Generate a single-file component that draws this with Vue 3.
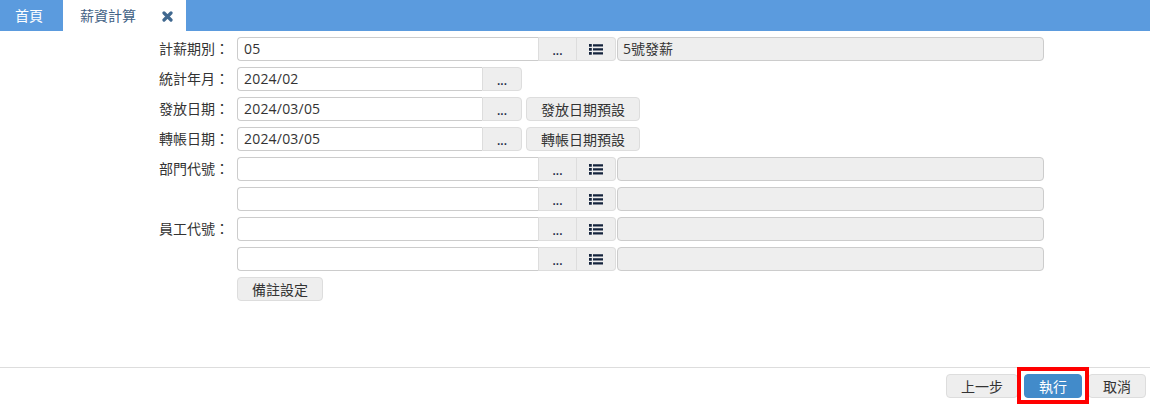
<script setup>
const rows = [
  { label: '計薪期別：', value: '05', kind: 'full', desc: '5號發薪' },
  { label: '統計年月：', value: '2024/02', kind: 'short' },
  { label: '發放日期：', value: '2024/03/05', kind: 'short', action: '發放日期預設' },
  { label: '轉帳日期：', value: '2024/03/05', kind: 'short', action: '轉帳日期預設' },
  { label: '部門代號：', value: '', kind: 'full', desc: '' },
  { label: '', value: '', kind: 'full', desc: '' },
  { label: '員工代號：', value: '', kind: 'full', desc: '' },
  { label: '', value: '', kind: 'full', desc: '' }
]
</script>

<template>
  <div class="page">
    <nav class="tabs">
      <div class="tab">首頁</div>
      <div class="tab active">
        <span>薪資計算</span>
        <svg class="close" width="11" height="11" viewBox="0 0 11 11"><path d="M2 2l7 7M9 2l-7 7" stroke="#40688f" stroke-width="3.2" stroke-linecap="round" /></svg>
      </div>
    </nav>
    <main class="form">
      <div v-for="(r, i) in rows" :key="i" class="row">
        <div class="label">{{ r.label }}</div>
        <div class="field" :class="r.kind">
          <input class="input" :value="r.value" readonly />
          <button class="btn dots">...</button>
          <button v-if="r.kind === 'full'" class="btn list">
            <svg width="14" height="11" viewBox="0 0 14 11"><path d="M0 0h2.8v2.8H0zM0 4h2.8v2.8H0zM0 8h2.8v2.8H0zM4 0.2h10v2.4H4zM4 4.2h10v2.4H4zM4 8.2h10v2.4H4z" fill="#14233c" /></svg>
          </button>
        </div>
        <div v-if="r.kind === 'full'" class="desc">{{ r.desc }}</div>
        <button v-if="r.action" class="btn action">{{ r.action }}</button>
      </div>
      <div class="row">
        <div class="label"></div>
        <button class="btn note">備註設定</button>
      </div>
    </main>
    <footer class="footer">
      <button class="btn foot prev">上一步</button>
      <div class="run-wrap">
        <button class="btn foot run">執行</button>
        <div class="highlight"></div>
      </div>
      <button class="btn foot cancel">取消</button>
    </footer>
  </div>
</template>

<style scoped>
.page {
  width: 1150px;
  height: 405px;
  display: flex;
  flex-direction: column;
  background: #fff;
  color: #333;
  font-family: "Open Sans", "Noto Sans CJK TC", sans-serif;
  font-size: 14px;
  overflow: hidden;
}
.tabs {
  height: 31px;
  flex: none;
  display: flex;
  background: #5b9bde;
}
.tab {
  width: 63px;
  display: flex;
  align-items: center;
  box-sizing: border-box;
  padding-left: 15px;
  padding-bottom: 2px;
  color: #fff;
}
.tab.active {
  width: 123px;
  padding-left: 17px;
  background: #fff;
  color: #3f6184;
}
.close {
  margin-left: 26px;
  margin-top: 3px;
}
.form {
  flex: 1;
  padding-top: 6px;
  display: flex;
  flex-direction: column;
  gap: 6px;
}
.row {
  height: 24px;
  display: flex;
  align-items: stretch;
}
.label {
  width: 237px;
  padding-right: 8px;
  box-sizing: border-box;
  text-align: right;
  line-height: 23px;
}
.field {
  display: flex;
}
.field.full { width: 379px; }
.field.short { width: 285px; }
.input {
  flex: 1;
  min-width: 0;
  box-sizing: border-box;
  border: 1px solid #ccc;
  border-right: none;
  border-radius: 4px 0 0 4px;
  padding: 0 6px 2px;
  font: inherit;
  letter-spacing: 0.2px;
  color: #333;
  outline: none;
  background: #fff;
}
.btn {
  box-sizing: border-box;
  border: 1px solid #ddd;
  background: #eee;
  color: #333;
  font: inherit;
  padding: 0;
  border-radius: 4px;
}
.dots {
  width: 39px;
  border-radius: 0;
  color: #14233c;
  font-size: 12px;
  font-weight: 600;
  line-height: 24px;
  padding-top: 1px;
}
.field.short .dots {
  width: 40px;
  border-radius: 0 4px 4px 0;
}
.list {
  width: 39px;
  border-left: none;
  border-radius: 0 4px 4px 0;
  display: flex;
  align-items: center;
  justify-content: center;
}
.desc {
  width: 427px;
  margin-left: 1px;
  box-sizing: border-box;
  border: 1px solid #ccc;
  border-radius: 4px;
  background: #eee;
  padding-left: 5px;
  line-height: 22px;
}
.action {
  width: 114px;
  margin-left: 4px;
}
.note {
  width: 86px;
}
.footer {
  height: 38px;
  flex: none;
  box-sizing: border-box;
  border-top: 1px solid #ddd;
  padding: 6px 4px 0 0;
  display: flex;
  justify-content: flex-end;
  align-items: flex-start;
  gap: 6px;
}
.foot {
  width: 58px;
  height: 24px;
}
.prev {
  width: 72px;
}
.run {
  background: #428bca;
  border-color: #428bca;
  color: #fff;
}
.run-wrap {
  position: relative;
  height: 24px;
}
.highlight {
  position: absolute;
  left: -7px;
  top: -7px;
  width: 72px;
  height: 37px;
  box-sizing: border-box;
  border: 4px solid #f00;
  pointer-events: none;
}
</style>
